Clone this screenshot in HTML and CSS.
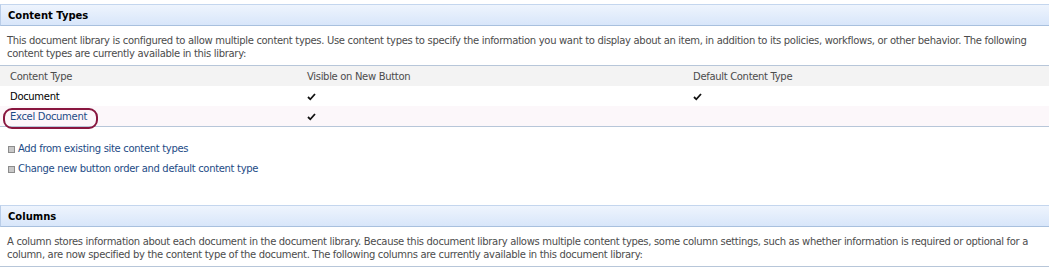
FILE: index.html
```html
<!DOCTYPE html>
<html lang="en">
<head>
    <meta charset="UTF-8">
    <title>Document Library Settings</title>
    <link rel="stylesheet" href="styles.css">
</head>
<body>
    <div class="section">
        <h3 class="section-title">Content Types</h3>
        <p class="section-desc">This document library is configured to allow multiple content types. Use content types to specify the information you want to display about an item, in addition to its policies, workflows, or other behavior. The following content types are currently available in this library:</p>

        <div class="ct-table">
            <div class="ct-row ct-head">
                <span>Content Type</span>
                <span>Visible on New Button</span>
                <span>Default Content Type</span>
            </div>
            <div class="ct-row">
                <span class="ct-name">Document</span>
                <span><svg class="check" viewBox="0 0 9 8"><path d="M1 4 L3.3 6.3 L8 1"/></svg></span>
                <span><svg class="check" viewBox="0 0 9 8"><path d="M1 4 L3.3 6.3 L8 1"/></svg></span>
            </div>
            <div class="ct-row ct-marked">
                <span class="ct-name"><a href="#" class="link">Excel Document</a><i class="circle"></i></span>
                <span><svg class="check" viewBox="0 0 9 8"><path d="M1 4 L3.3 6.3 L8 1"/></svg></span>
                <span></span>
            </div>
        </div>

        <ul class="actions">
            <li><a href="#" class="link">Add from existing site content types</a></li>
            <li><a href="#" class="link">Change new button order and default content type</a></li>
        </ul>
    </div>

    <div class="section">
        <h3 class="section-title">Columns</h3>
        <p class="section-desc">A column stores information about each document in the document library. Because this document library allows multiple content types, some column settings, such as whether information is required or optional for a column, are now specified by the content type of the document. The following columns are currently available in this document library:</p>
    </div>
</body>
</html>
```

FILE: styles.css
```css
* {
    box-sizing: border-box;
    margin: 0;
    padding: 0;
}

body {
    background-color: #fff;
    color: #4c4c4c;
    font-family: 'DejaVu Sans', sans-serif;
    font-size: 10px;
    letter-spacing: -0.32px;
    padding-top: 4px;
}

.section-title {
    font-size: 10px;
    font-weight: bold;
    letter-spacing: 0;
    color: #000;
    padding: 5px 7px 3px;
    height: 22px;
    border-top: 1px solid #c4d6ee;
    border-bottom: 1px solid #a8c0de;
    border-left: 1px solid #b9cde8;
    background: linear-gradient(#eef4fd, #d8e6fa);
}

.section-desc {
    padding: 8px 7px 6px;
    line-height: 13px;
    height: 40px;
    border-bottom: 1px solid #b7c6d9;
}

.ct-table {
    border-bottom: 1px solid #b7c6d9;
}

.ct-row {
    display: grid;
    grid-template-columns: 300px 386px 1fr;
    height: 20px;
    align-items: center;
    padding-top: 1px;
}

.ct-row span {
    padding-left: 7px;
}

.ct-row span:first-child {
    padding-left: 10px;
}

.ct-head {
    background-color: #f3f3f3;
    color: #4c4c4c;
}

.ct-name {
    color: #000;
    position: relative;
}

.ct-marked {
    background-color: #fcf7fa;
}

.link {
    color: #1d4b86;
    text-decoration: none;
}

.circle {
    position: absolute;
    left: 3px;
    top: -3px;
    width: 95px;
    height: 21px;
    border: 2px solid #88163f;
    border-radius: 9px;
}

.check {
    width: 9px;
    height: 8px;
    fill: none;
    stroke: #111;
    stroke-width: 1.8;
    display: block;
}

.actions {
    list-style: none;
    padding: 15px 0 23px;
}

.actions li {
    height: 20px;
    line-height: 14px;
    padding-left: 18px;
    position: relative;
}

.actions li::before {
    content: "";
    position: absolute;
    left: 8px;
    top: 4px;
    width: 5px;
    height: 5px;
    background: #c8c8c8;
    border: 1px solid #8c8c8c;
}
```
